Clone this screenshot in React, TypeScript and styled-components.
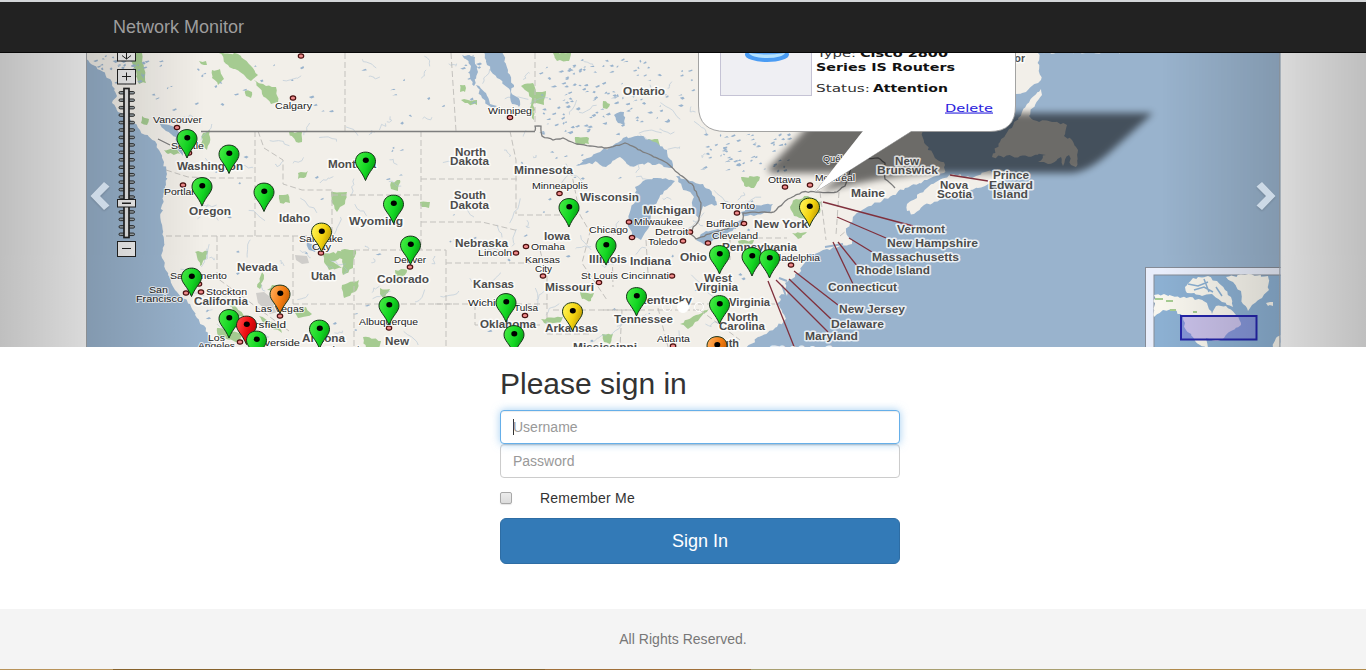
import React from 'react';
import styled, { createGlobalStyle, css } from 'styled-components';

const GlobalStyle = createGlobalStyle`
  * { box-sizing: border-box; }
  html, body { margin: 0; padding: 0; overflow: hidden; }
  body {
    background: #fff;
    color: #333;
    font: 14px/20px "Liberation Sans", Arial, sans-serif;
  }
`;

const Page = styled.div`
  display: flex;
  flex-direction: column;
  width: 100%;
  height: 670px;
  overflow: hidden;
`;

const NavBar = styled.nav`
  flex: none;
  height: 53px;
  padding-left: 113px;
  display: flex;
  align-items: center;
  background: #222;
  border-top: 2px solid #d3d6d8;
  border-bottom: 1px solid #080808;
`;

const Brand = styled.a`
  color: #9d9d9d;
  font-size: 18px;
  line-height: 20px;
`;

const Carousel = styled.section`
  position: relative;
  flex: none;
  height: 294px;
  background: #fff;
  overflow: hidden;
`;

const MapDrawing = styled.svg`
  display: block;
  width: 1366px;
  height: 294px;
`;

const Control = styled.div<{ $side: 'left' | 'right' }>`
  position: absolute;
  top: 0;
  bottom: 0;
  width: 15%;
  display: flex;
  align-items: center;
  opacity: 0.5;
  ${({ $side }) =>
    $side === 'left'
      ? css`
          left: 0;
          padding-left: 90px;
          background: linear-gradient(to right, rgba(0, 0, 0, 0.5), rgba(0, 0, 0, 0.0001));
        `
      : css`
          right: 0;
          justify-content: flex-end;
          padding-right: 90px;
          background: linear-gradient(to left, rgba(0, 0, 0, 0.5), rgba(0, 0, 0, 0.0001));
        `}
`;

const Chevron = styled.svg<{ $flip?: boolean }>`
  width: 20px;
  height: 28px;
  margin-top: -8px;
  filter: drop-shadow(0 1px 1px rgba(0, 0, 0, 0.4));
  transform: ${({ $flip }) => ($flip ? 'scaleX(-1)' : 'none')};
`;

const Indicators = styled.div`
  position: absolute;
  left: 0;
  right: 0;
  bottom: 34px;
  display: flex;
  justify-content: center;
  align-items: center;
  gap: 5px;
  height: 12px;
`;

const Indicator = styled.span<{ $active?: boolean }>`
  width: ${({ $active }) => ($active ? 12 : 10)}px;
  height: ${({ $active }) => ($active ? 12 : 10)}px;
  border: 1px solid #fff;
  border-radius: 10px;
  background: ${({ $active }) => ($active ? '#fff' : 'transparent')};
`;

const SignInForm = styled.form`
  flex: none;
  width: 400px;
  height: 262px;
  margin-left: 500px;
  padding-top: 20px;
  display: flex;
  flex-direction: column;
`;

const Heading = styled.h2`
  margin: 0 0 10px;
  font-size: 30px;
  line-height: 33px;
  font-weight: 400;
  color: #333;
`;

const Field = styled.div<{ $focused?: boolean }>`
  height: 34px;
  padding: 6px 12px;
  display: flex;
  align-items: center;
  position: relative;
  z-index: ${({ $focused }) => ($focused ? 1 : 0)};
  background: #fff;
  border: 1px solid ${({ $focused }) => ($focused ? '#66afe9' : '#ccc')};
  border-radius: 4px;
  box-shadow: inset 0 1px 1px rgba(0, 0, 0, 0.075)
    ${({ $focused }) => ($focused ? ', 0 0 8px rgba(102, 175, 233, 0.6)' : '')};
`;

const Caret = styled.span`
  width: 1px;
  height: 16px;
  margin-right: -1px;
  background: #333;
`;

const Input = styled.input`
  flex: 1;
  min-width: 0;
  padding: 0;
  border: 0;
  outline: 0;
  background: transparent;
  font: inherit;
  color: #555;
  &::placeholder { color: #999; opacity: 1; }
`;

const RememberRow = styled.label`
  display: flex;
  align-items: center;
  height: 20px;
  margin: 10px 0;
  gap: 28px;
  letter-spacing: 0.22px;
`;

const CheckBox = styled.input`
  appearance: none;
  width: 12px;
  height: 12px;
  margin: 0;
  border: 1px solid #a8a8a8;
  border-radius: 2px;
  background: linear-gradient(#ececec, #dcdcdc);
  box-shadow: 0 1px 1px rgba(0, 0, 0, 0.1);
`;

const SubmitButton = styled.button`
  height: 46px;
  border: 1px solid #2e6da4;
  border-radius: 6px;
  background: #337ab7;
  color: #fff;
  font: 18px/24px "Liberation Sans", Arial, sans-serif;
`;

const Footer = styled.footer`
  flex: 1;
  display: flex;
  align-items: center;
  justify-content: center;
  background: #f4f4f4;
  color: #777;
  letter-spacing: 0.04px;
`;

const BottomEdge = styled.div`
  flex: none;
  height: 1px;
  background: linear-gradient(
    to right,
    #b8935a 0 113px,
    #86622c 113px 545px,
    #a0703a 545px 751px,
    #a89f70 751px 1170px,
    #b08a4c 1170px
  );
`;

type Pt = [number, number];

/* Small repeatable random source, so that the coastlines are the same on every render. */
const makeRandom = (seed: number) => {
  let s = seed;
  return () => {
    s = (s * 16807) % 2147483647;
    return s / 2147483647;
  };
};

const rough = (points: Pt[], amount = 2.2, closed = true, seed = 77) => {
  const rand = makeRandom(seed + points.length * 131 + Math.round(points[0][0]));
  const out: string[] = [];
  const n = closed ? points.length : points.length - 1;
  for (let i = 0; i < n; i++) {
    const [x0, y0] = points[i];
    const [x1, y1] = points[(i + 1) % points.length];
    const steps = Math.max(1, Math.round(Math.hypot(x1 - x0, y1 - y0) / 3));
    for (let k = 0; k < steps; k++) {
      const t = k / steps;
      const j = k === 0 ? 0 : amount;
      out.push(`${(x0 + (x1 - x0) * t + (rand() - 0.5) * j).toFixed(1)},${(y0 + (y1 - y0) * t + (rand() - 0.5) * j).toFixed(1)}`);
    }
  }
  if (!closed) out.push(points[points.length - 1].join(','));
  return `M${out.join('L')}${closed ? 'Z' : ''}`;
};

const WATER = '#99b3cd';
const LAND = '#f2efe9';
const PARK = '#a5cb91';

const seas: Pt[][] = [
  [[80, 57], [88, 60], [100, 70], [112, 82], [117, 96], [112, 103], [118, 112], [130, 119], [140, 130], [155, 141], [159, 150], [164, 162], [167, 174], [166, 185], [162, 205], [161, 222], [164, 240], [162, 258], [168, 275], [175, 290], [190, 304], [197, 318], [206, 328], [213, 350], [80, 350]],
  [[745, 350], [758, 337], [777, 327], [786, 319], [779, 306], [780, 292], [787, 296], [785, 283], [790, 279], [795, 277], [803, 265], [808, 255], [823, 250], [838, 247], [852, 244], [850, 239], [846, 232], [850, 223], [855, 215], [867, 207], [882, 201], [893, 195], [905, 188], [927, 180], [944, 173], [945, 165], [934, 156], [926, 145], [922, 133], [940, 120], [1000, 100], [1016, 94], [1026, 92], [1041, 80], [1038, 53], [1290, 50], [1290, 350]],
];

const lands: Pt[][] = [
  [[907, 204], [907, 211], [914, 214], [924, 205], [941, 199], [965, 192], [985, 186], [1008, 177], [1002, 170], [985, 172], [972, 178], [953, 174], [936, 182], [920, 193]],
  [[992, 157], [1000, 142], [1012, 128], [1027, 104], [1041, 89], [1042, 95], [1035, 105], [1029, 116], [1037, 121], [1052, 122], [1067, 125], [1064, 136], [1072, 140], [1078, 150], [1076, 167], [1071, 165], [1069, 155], [1063, 166], [1061, 157], [1048, 164], [1038, 162], [1046, 155], [1020, 156]],
];

const lakes: Pt[][] = [
  [[577, 166], [597, 153], [610, 147], [623, 138], [640, 136], [655, 142], [667, 150], [673, 168], [650, 163], [630, 166], [620, 157], [606, 167], [597, 162]],
  [[635, 187], [643, 181], [657, 178], [675, 181], [664, 191], [658, 200], [651, 210], [649, 227], [641, 240], [632, 236], [628, 223], [631, 208], [637, 195]],
  [[676, 176], [690, 181], [703, 184], [715, 197], [717, 205], [703, 206], [699, 218], [692, 210], [694, 197], [682, 187]],
  [[696, 240], [706, 231], [725, 230], [744, 219], [744, 224], [724, 235], [705, 245]],
  [[741, 212], [751, 206], [773, 204], [770, 212], [754, 216], [743, 216]],
  [[483, 52], [502, 52], [508, 70], [514, 87], [511, 92], [520, 101], [519, 107], [512, 104], [510, 90], [497, 78], [487, 65]],
  [[462, 55], [475, 57], [478, 72], [474, 86], [470, 76], [471, 66]],
  [[476, 85], [486, 93], [490, 104], [497, 106], [491, 107], [482, 98]],
  [[614, 115], [624, 112], [624, 125], [618, 123]],
  [[307, 242], [315, 245], [315, 252], [309, 250]],
  [[160, 124], [172, 126], [180, 133], [179, 142], [183, 156], [177, 149], [176, 137], [166, 131]],
];

const parks: Pt[][] = [
  [[130, 53], [142, 53], [146, 83], [139, 84], [134, 68]],
  [[219, 53], [238, 54], [249, 64], [258, 75], [251, 81], [240, 72], [228, 65]],
  [[212, 70], [220, 69], [224, 79], [218, 85], [212, 78]],
  [[254, 80], [266, 86], [276, 87], [278, 102], [271, 104], [262, 94]],
  [[199, 61], [206, 61], [207, 65], [201, 64]],
  [[245, 91], [252, 92], [251, 98], [246, 96]],
  [[289, 132], [302, 132], [302, 142], [296, 142]],
  [[298, 173], [308, 171], [304, 178], [298, 179]],
  [[142, 116], [149, 119], [147, 125], [141, 123]],
  [[164, 150], [176, 148], [180, 154], [168, 154]],
  [[203, 133], [210, 130], [210, 137], [207, 150], [200, 145]],
  [[331, 192], [347, 192], [345, 204], [337, 212], [332, 203]],
  [[279, 195], [288, 194], [290, 203], [280, 203]],
  [[195, 252], [208, 251], [206, 259], [200, 266], [197, 257]],
  [[262, 272], [264, 275], [260, 289], [257, 287]],
  [[272, 285], [278, 286], [273, 292], [267, 290]],
  [[323, 255], [348, 250], [350, 257], [331, 261], [342, 268], [329, 270], [324, 262]],
  [[224, 296], [237, 308], [248, 319], [239, 316], [227, 304]],
  [[217, 328], [242, 334], [239, 342], [219, 336]],
  [[259, 316], [278, 324], [282, 333], [267, 326]],
  [[294, 310], [306, 307], [312, 314], [298, 318]],
  [[341, 250], [356, 250], [353, 268], [343, 275]],
  [[342, 285], [359, 280], [357, 290], [344, 298]],
  [[395, 270], [407, 270], [403, 278], [395, 276]],
  [[380, 288], [390, 289], [384, 299], [380, 294]],
  [[391, 182], [400, 180], [398, 191], [391, 189]],
  [[420, 202], [430, 202], [429, 208], [422, 207]],
  [[461, 100], [477, 100], [477, 105], [465, 103]],
  [[460, 85], [465, 85], [465, 92], [460, 92]],
  [[521, 86], [533, 83], [536, 92], [546, 91], [544, 105], [534, 103], [534, 120], [530, 108], [532, 98]],
  [[553, 53], [571, 53], [569, 61], [557, 61]],
  [[575, 137], [589, 138], [589, 144], [577, 145]],
  [[648, 139], [658, 139], [660, 146], [651, 148]],
  [[603, 101], [610, 104], [607, 109], [603, 108]],
  [[741, 177], [760, 177], [754, 188], [746, 187]],
  [[796, 199], [808, 196], [821, 202], [820, 213], [808, 219], [794, 216], [790, 207]],
  [[792, 233], [807, 232], [798, 239]],
  [[738, 241], [754, 240], [752, 245], [739, 245]],
  [[680, 324], [696, 315], [710, 308], [698, 321], [688, 329]],
  [[580, 292], [594, 293], [591, 301], [582, 299]],
  [[541, 319], [563, 317], [560, 323], [544, 323]],
  [[602, 334], [613, 334], [610, 344], [604, 342]],
  [[363, 337], [381, 341], [379, 348], [366, 348]],
  [[1010, 117], [1019, 117], [1015, 125], [1009, 124]],
];

const stateLines: string[] = [
  'M345 53V131', 'M451 53L456 131', 'M535 53V124', 'M255 131V236', 'M166 236H332', 'M217 236V278L289 331',
  'M293 236V304', 'M332 191V236', 'M293 304H454', 'M258 131L264 148L283 160V184L302 190H332', 'M421 131V250',
  'M332 195H421', 'M354 250H446', 'M354 250V347', 'M446 250V347', 'M421 179H518', 'M421 222H482L519 231',
  'M446 263H540', 'M435 304H547', 'M510 131L516 160V214', 'M518 215H571', 'M547 276V334', 'M540 250L547 276',
  'M166 170L188 177L215 178H255', 'M571 170L580 215L590 232L582 263L607 300', 'M612 240L613 287',
  'M646 240L648 273', 'M553 310H635', 'M603 310H700', 'M622 310L620 347', 'M658 308L668 347',
  'M547 334H592', 'M730 238H787', 'M730 238V260', 'M680 304H775', 'M700 310L740 340', 'M820 192L826 240',
  'M839 192L836 235', 'M475 304V325H540', 'M840 236L865 215',
];

const border: Pt[] = [[535, 131], [535, 126], [541, 126], [542, 136], [553, 140], [563, 138], [577, 144], [590, 146], [607, 148], [625, 143], [646, 153], [667, 163], [680, 175], [692, 184], [701, 203], [699, 220], [690, 232], [696, 239], [712, 233], [742, 224], [743, 213], [774, 212], [788, 199], [802, 192], [837, 192], [845, 186], [854, 159], [878, 158], [885, 163], [885, 179], [895, 188]];

/* text, left, right, baseline, bold state name */
type Label = [string, number, number, number, number?];
const labels: Label[] = [
  ['Calgary', 275, 312, 108.5], ['Vancouver', 153, 202, 123], ['Seattle', 171, 204, 148.5], ['Washington', 177, 243, 169.5, 1],
  ['Montana', 328, 376, 167.5, 1], ['Portland', 164, 203, 195], ['Oregon', 189, 231, 214.5, 1], ['Idaho', 279, 310, 221.5, 1],
  ['Salt Lake', 299, 343, 241.5], ['City', 312, 331, 250], ['Nevada', 237, 278, 270.5, 1], ['Utah', 311, 336, 279.5, 1],
  ['Sacramento', 170, 227, 279], ['Stockton', 206, 247, 295], ['San', 149, 168, 293], ['Francisco', 136, 183, 301.5],
  ['California', 194, 248, 305, 1], ['Las Vegas', 255, 304, 311.5], ['Bakersfield', 228, 286, 327.5], ['Los', 208, 225, 340.5],
  ['Angeles', 198, 235, 348.5], ['Riverside', 254, 300, 346], ['Arizona', 302, 345, 342, 1], ['Phoenix', 325, 365, 353],
  ['Winnipeg', 488, 532, 113.5], ['Ontario', 623, 665, 94.5, 1], ['North', 455, 486, 156, 1], ['Dakota', 450, 489, 164.5, 1],
  ['Minnesota', 514, 573, 173.5, 1], ['Minneapolis', 532, 588, 188.5], ['Wisconsin', 580, 639, 200.5, 1], ['South', 454, 486, 198.5, 1],
  ['Dakota', 450, 489, 208.5, 1], ['Wyoming', 349, 403, 225, 1], ['Nebraska', 455, 508, 246.5, 1], ['Lincoln', 478, 512, 256],
  ['Omaha', 531, 565, 250], ['Iowa', 544, 570, 240, 1], ['Kansas', 525, 560, 263], ['City', 535, 552, 272],
  ['Milwaukee', 634, 683, 225], ['Chicago', 589, 628, 233], ['Michigan', 643, 695, 214, 1], ['Detroit', 655, 688, 235],
  ['Toledo', 648, 678, 244.5], ['Indiana', 630, 671, 265, 1], ['Illinois', 589, 627, 262.5, 1], ['St Louis', 581, 618, 278.5],
  ['Cincinnati', 621, 669, 279], ['Missouri', 545, 594, 290.5, 1], ['Kansas', 473, 514, 288, 1], ['Colorado', 377, 429, 282.5, 1],
  ['Denver', 394, 426, 263], ['Wichita', 468, 505, 306], ['Tulsa', 514, 538, 311], ['Oklahoma', 480, 536, 327.5, 1],
  ['Arkansas', 545, 598, 332, 1], ['Tennessee', 614, 673, 322.5, 1], ['Kentucky', 638, 692, 303.5, 1], ['Albuquerque', 359, 418, 324.5],
  ['New', 385, 409, 345, 1], ['Mississippi', 573, 637, 351, 1], ['Atlanta', 657, 690, 341.5], ['Toronto', 720, 755, 209],
  ['Buffalo', 706, 739, 227], ['New York', 754, 808, 227.5, 1], ['Cleveland', 712, 758, 239], ['Pennsylvania', 722, 797, 251, 1],
  ['Ohio', 680, 707, 260.5, 1], ['Philadelphia', 764, 820, 261], ['West', 704, 732, 281.5, 1], ['Virginia', 695, 738, 290.5, 1],
  ['Virginia', 729, 770, 305.5, 1], ['North', 727, 758, 320.5, 1], ['Carolina', 719, 765, 330, 1], ['South', 708, 739, 346.5, 1],
  ['Vermont', 897, 945, 233, 1], ['New Hampshire', 887, 978, 246.5, 1], ['Massachusetts', 872, 959, 260.5, 1],
  ['Rhode Island', 856, 930, 274, 1], ['Connecticut', 828, 897, 290.5, 1], ['New Jersey', 839, 905, 313, 1],
  ['Delaware', 831, 884, 327.5, 1], ['Maryland', 805, 858, 339.5, 1], ['District of', 771, 830, 354.5, 1], ['Maine', 851, 885, 197, 1],
  ['Nova', 940, 968, 188.5, 1], ['Scotia', 937, 972, 198, 1], ['Prince', 993, 1029, 178.5, 1], ['Edward', 989, 1033, 188.5, 1],
  ['Island', 993, 1028, 198, 1], ['New', 895, 919, 165, 1], ['Brunswick', 877, 938, 174, 1], ['Québec', 823, 855, 161.5],
  ['Ottawa', 768, 801, 183], ['Montréal', 815, 855, 181], ['Labrador', 980, 1025, 62, 1],
];

const cities: Pt[] = [
  [293, 98], [177, 127.5], [189, 153], [183, 185], [301, 56], [321, 253], [201, 292], [199, 284], [186, 293], [280, 316],
  [240, 342], [510, 117.5], [559.5, 193.5], [516, 253], [526, 246.5], [543, 276], [629, 222], [632, 237.5], [683, 241],
  [690, 232], [599, 282.5], [672, 276], [410, 267], [525, 315.5], [389, 328], [673, 346], [737, 213], [744, 223.5],
  [708, 243], [791, 265], [785, 187], [810, 185],
];

const pointers: number[][] = [
  [823, 202, 913, 226], [837, 217, 886, 238], [849, 238, 872, 252], [838, 242, 858, 267], [833, 242, 853, 284],
  [794, 271, 838, 305], [789, 279, 831, 319], [776, 280, 828, 332], [768, 281, 795, 349], [950, 175, 988, 181],
];

type Tone = 'green' | 'yellow' | 'orange' | 'red';
const pins: [number, number, Tone?][] = [
  [187, 128.5], [229, 144], [202, 176.5], [264, 182], [365.5, 151], [393.5, 194], [410.5, 235], [321.5, 222, 'yellow'],
  [191.5, 267], [280, 284, 'orange'], [229, 308.5], [246.5, 315, 'red'], [256.5, 330], [319.5, 319], [389, 295.5],
  [506, 292.5], [514, 324.5], [572.5, 301.5, 'yellow'], [606, 235.5], [569, 197.5], [636.5, 286.5], [809.5, 197, 'yellow'],
  [719.5, 244.5], [752, 246.5], [769.5, 248.5], [719.5, 294.5], [717, 335.5, 'orange'],
];

const tones: Record<Tone, [string, string, string]> = {
  green: ['#3fe83f', '#12d622', '#079a12'],
  yellow: ['#fff04e', '#f2d20e', '#b89404'],
  orange: ['#ffa650', '#f27c12', '#c25c04'],
  red: ['#ff4040', '#ea0a0e', '#b00406'],
};

const Pin = ({ x, y, tone = 'green' }: { x: number; y: number; tone?: Tone }) => (
  <g transform={`translate(${x} ${y + 0.6})`}>
    <path d="M0 .5C6 .5 10 4.6 10 9.7C10 15.5 4.2 18.5 0 28.9C-4.200 18.500-10 15.500-10 9.700C-10 4.600-6 .5 0 .5Z" fill={`url(#pin-${tone})`} stroke="#17331a" strokeWidth="1" />
    <ellipse cx="0.3" cy="8.600" rx="3" ry="2.700" fill="#000" />
  </g>
);

const Terrain = () => {
  const rand = makeRandom(4242);
  const ponds: React.ReactNode[] = [];
  const addPonds = (x0: number, x1: number, y0: number, y1: number, count: number) => {
    for (let i = 0; i < count; i++) {
      const x = x0 + rand() * (x1 - x0);
      const y = y0 + rand() * (y1 - y0);
      const w = 1 + rand() * 3.5;
      ponds.push(<path key={`${x}-${y}`} d={`M${x} ${y}l${w} ${-1 - rand()}l${rand() * 2} ${1 + rand()}l${-w * 0.7} ${rand() * 1.5}z`} />);
    }
  };
  addPonds(538, 640, 60, 135, 110);
  addPonds(640, 698, 60, 130, 22);
  addPonds(700, 790, 134, 172, 60);
  addPonds(90, 145, 56, 84, 40);
  addPonds(146, 340, 60, 128, 26);
  addPonds(460, 480, 55, 105, 14);
  addPonds(350, 460, 60, 125, 8);
  addPonds(200, 420, 135, 340, 26);
  addPonds(520, 620, 150, 180, 12);
  addPonds(430, 780, 190, 345, 22);
  const rivers: React.ReactNode[] = [];
  for (let i = 0; i < 130; i++) {
    let x = 175 + rand() * 580;
    let y = 56 + rand() * 285;
    const dx = (rand() - 0.5) * 7;
    const dy = (rand() - 0.35) * 6;
    let d = `M${x.toFixed(1)} ${y.toFixed(1)}`;
    for (let k = 0; k < 5; k++) {
      x += dx + (rand() - 0.5) * 5;
      y += dy + (rand() - 0.5) * 5;
      d += `L${x.toFixed(1)} ${y.toFixed(1)}`;
    }
    rivers.push(<path key={i} d={d} />);
  }
  return (
    <>
      <g fill="none" stroke="#a9bfd3" strokeWidth="0.8" opacity="0.65">{rivers}</g>
      <g fill={WATER}>{ponds}</g>
    </>
  );
};

const ZoomSlider = () => (
  <g stroke="#222" fill="#f0f0f0">
    <rect x="117.500" y="45.500" width="18" height="15.500" />
    <path d="M126.500 53V59M122 55.500L126.500 59L131 55.500" fill="none" />
    <rect x="117.500" y="69.500" width="18" height="14.500" />
    <path d="M122 76.500H131M126.500 72.500V80.500" />
    {Array.from({ length: 20 }, (_, i) => (
      <rect key={i} x="119" y={91.5 + i * 7.45} width="15.500" height="2.500" rx="1.250" fill="#9aa4a9" strokeWidth="0.9" />
    ))}
    <rect x="124" y="88.500" width="5" height="149" fill="#e6e6e6" strokeWidth="1.700" />
    <rect x="117.500" y="199.500" width="18" height="7.500" />
    <path d="M122 203.300H131" strokeWidth="1.600" />
    <rect x="117.500" y="241.500" width="18" height="15" />
    <path d="M122 248.500H131" />
  </g>
);

const CalloutShadow = () => (
  <path d="M767 170L800 135L820 113H1153L1108 154Q1086 173 1070 173H935Q880 176 820 192L845 173H772Z" fill="#000" opacity="0.55" filter="url(#soft)" />
);

const Callout = () => (
  <g>
    <path d="M698.500 40V106Q698.500 131.500 726 131.500H863L815 192L911 131.500H990Q1015.500 131.500 1015.500 106V40Z" fill="#fff" stroke="#999" strokeWidth="0.9" />
    <path d="M863 131L815 192L911 131Z" fill="#fff" />
    <rect x="720.500" y="40" width="91" height="55.500" fill="#efeff3" stroke="#c5c3d5" />
    <ellipse cx="767" cy="54.500" rx="22" ry="7.500" fill="#4a9cf4" />
    <ellipse cx="767" cy="52.500" rx="18" ry="5.500" fill="#b4e2ff" />
    <ellipse cx="767" cy="51.500" rx="20" ry="3" fill="#5fa8f6" />
    <g fontFamily="'DejaVu Sans', sans-serif" fontSize="11" fill="#111">
      <text x="817" y="56.500" textLength="39" lengthAdjust="spacingAndGlyphs" fill="#333">Type:</text>
      <text x="860" y="56.500" textLength="88" lengthAdjust="spacingAndGlyphs" fontWeight="700">Cisco 2800</text>
      <text x="816" y="71" textLength="139" lengthAdjust="spacingAndGlyphs" fontWeight="700">Series IS Routers</text>
      <text x="816" y="92" textLength="54" lengthAdjust="spacingAndGlyphs" fill="#333">Status:</text>
      <text x="873" y="92" textLength="75" lengthAdjust="spacingAndGlyphs" fontWeight="700">Attention</text>
      <text x="945" y="111.500" textLength="48" lengthAdjust="spacingAndGlyphs" fill="#2a22dd" textDecoration="underline">Delete</text>
    </g>
  </g>
);

const miniLands: Pt[][] = [
  [[1154, 295], [1164, 294], [1180, 298], [1190, 297], [1207, 303], [1212, 314], [1216, 306], [1226, 306], [1236, 315], [1241, 325], [1231, 331], [1224, 338], [1218, 341], [1206, 338], [1208, 348], [1200, 345], [1186, 330], [1183, 317], [1173, 309], [1163, 310], [1154, 317]],
  [[1185, 287], [1193, 278], [1208, 276], [1217, 281], [1225, 290], [1231, 297], [1233, 307], [1222, 302], [1212, 294], [1202, 296], [1187, 293]],
  [[1226, 277], [1245, 275], [1268, 276], [1269, 290], [1260, 299], [1252, 305], [1248, 311], [1243, 304], [1241, 291], [1233, 282]],
  [[1266, 303], [1273, 302], [1273, 306], [1268, 306]],
  [[1273, 348], [1276, 338], [1281, 335], [1281, 348]],
];

const OverviewMap = () => (
  <g>
    <rect x="1145.500" y="267.500" width="140" height="90" fill="#e9eefb" stroke="#858b96" />
    <rect x="1154" y="275" width="130" height="80" fill="#8cb0d2" stroke="#858b96" />
    <g fill="#f8f6ee">
      {miniLands.map((p, i) => <path key={i} d={rough(p, 2.6)} />)}
    </g>
    <path d="M1188 284L1198 286L1208 282M1194 290L1204 287L1213 292M1216 287L1222 296M1204 279L1209 292" stroke="#8cb0d2" strokeWidth="1.500" fill="none" />
    <path d="M1155 299h8M1166 301h7M1170 310h6M1193 312h4" stroke={PARK} strokeWidth="2" />
    <rect x="1181" y="316" width="75.500" height="23.500" fill="#7868e0" fillOpacity="0.38" stroke="#2424a8" strokeWidth="2" />
  </g>
);

const NetworkMap = () => (
  <MapDrawing viewBox="0 53 1366 294" aria-label="Network map">
    <defs>
      <clipPath id="frame"><rect x="86" y="53" width="1194.500" height="294" /></clipPath>
      <filter id="soft" x="-10%" y="-30%" width="120%" height="160%"><feGaussianBlur stdDeviation="3.500" /></filter>
      {(Object.keys(tones) as Tone[]).map((t) => (
        <linearGradient key={t} id={`pin-${t}`} x1="0.1" y1="0.2" x2="1" y2="0.6">
          <stop offset="0" stopColor={tones[t][0]} />
          <stop offset="0.55" stopColor={tones[t][1]} />
          <stop offset="1" stopColor={tones[t][2]} />
        </linearGradient>
      ))}
    </defs>
    <g clipPath="url(#frame)">
      <rect x="86" y="53" width="1195" height="294" fill={LAND} />
      <g fill={PARK}>{parks.map((p, i) => <path key={i} d={rough(p, 2.4)} />)}</g>
      <path d="M256 293l8-1l10 8l4 12l-8 2l-12-11zM295 255l12 1l2 7l-7 1l-6 -4z" fill="#cfcdca" />
      <Terrain />
      <g fill="none" stroke="#c3c1bd" strokeWidth="1" strokeDasharray="6 3">{stateLines.map((d, i) => <path key={i} d={d} />)}</g>
      <g fill={WATER}>
        {seas.map((p, i) => <path key={i} d={rough(p, 3)} />)}
        {lakes.map((p, i) => <path key={i} d={rough(p, 2.6)} />)}
      </g>
      <g fill={LAND}>{lands.map((p, i) => <path key={i} d={rough(p, 3)} />)}</g>
      <path d="M782 285l5 14M783 300l-6 5M787 281l-8-3M825 247l18-3" stroke={WATER} strokeWidth="2" fill="none" />
      <g fill="none" stroke="#7e7e7e" strokeWidth="1.300">
        <path d="M158 139L170 145M201 131.500H535" />
        <path d={rough(border, 1.2, false)} />
      </g>
      <CalloutShadow />
      <g stroke="#80303c" strokeWidth="1.300">
        {pointers.map(([x1, y1, x2, y2], i) => <line key={i} x1={x1} y1={y1} x2={x2} y2={y2} />)}
      </g>
      <g fill="#f08c8c" stroke="#4a1010" strokeWidth="1.200">
        {cities.map(([x, y]) => <ellipse key={`${x}-${y}`} cx={x} cy={y} rx="2.700" ry="2.200" />)}
      </g>
      <g fontFamily="'Liberation Sans', Arial, sans-serif" stroke="#fff" strokeOpacity="0.75" strokeLinejoin="round" paintOrder="stroke">
        {labels.map(([text, x0, x1, y, bold], i) => (
          <text key={i} x={x0} y={y} textLength={x1 - x0} lengthAdjust="spacingAndGlyphs" fontSize={bold ? 10 : 9} fontWeight={bold ? 700 : 400} fill={bold ? '#4c4c4c' : '#222'} strokeWidth={bold ? 3 : 2}>
            {text}
          </text>
        ))}
      </g>
      <Callout />
      {pins.map(([x, y, tone]) => <Pin key={`${x}-${y}`} x={x} y={y} tone={tone} />)}
      <ZoomSlider />
      <OverviewMap />
      <path d="M86.500 53V347M1279.800 53V347" stroke="#a3a7ac" />
    </g>
  </MapDrawing>
);

const ChevronIcon = ({ flip }: { flip?: boolean }) => (
  <Chevron viewBox="0 0 20 28" $flip={flip}>
    <path d="M14 0L19.500 4.500L10 14L19.500 23.500L14 28L0.500 14Z" fill="#fff" />
  </Chevron>
);

export default function App() {
  return (
    <Page>
      <GlobalStyle />
      <NavBar>
        <Brand>Network Monitor</Brand>
      </NavBar>
      <Carousel>
        <NetworkMap />
        <Control $side="left"><ChevronIcon /></Control>
        <Control $side="right"><ChevronIcon flip /></Control>
        <Indicators>
          <Indicator />
          <Indicator $active />
          <Indicator />
        </Indicators>
      </Carousel>
      <SignInForm>
        <Heading>Please sign in</Heading>
        <Field $focused>
          <Caret />
          <Input placeholder="Username" />
        </Field>
        <Field>
          <Input type="password" placeholder="Password" />
        </Field>
        <RememberRow>
          <CheckBox type="checkbox" />
          Remember Me
        </RememberRow>
        <SubmitButton type="button">Sign In</SubmitButton>
      </SignInForm>
      <Footer>All Rights Reserved.</Footer>
      <BottomEdge />
    </Page>
  );
}
